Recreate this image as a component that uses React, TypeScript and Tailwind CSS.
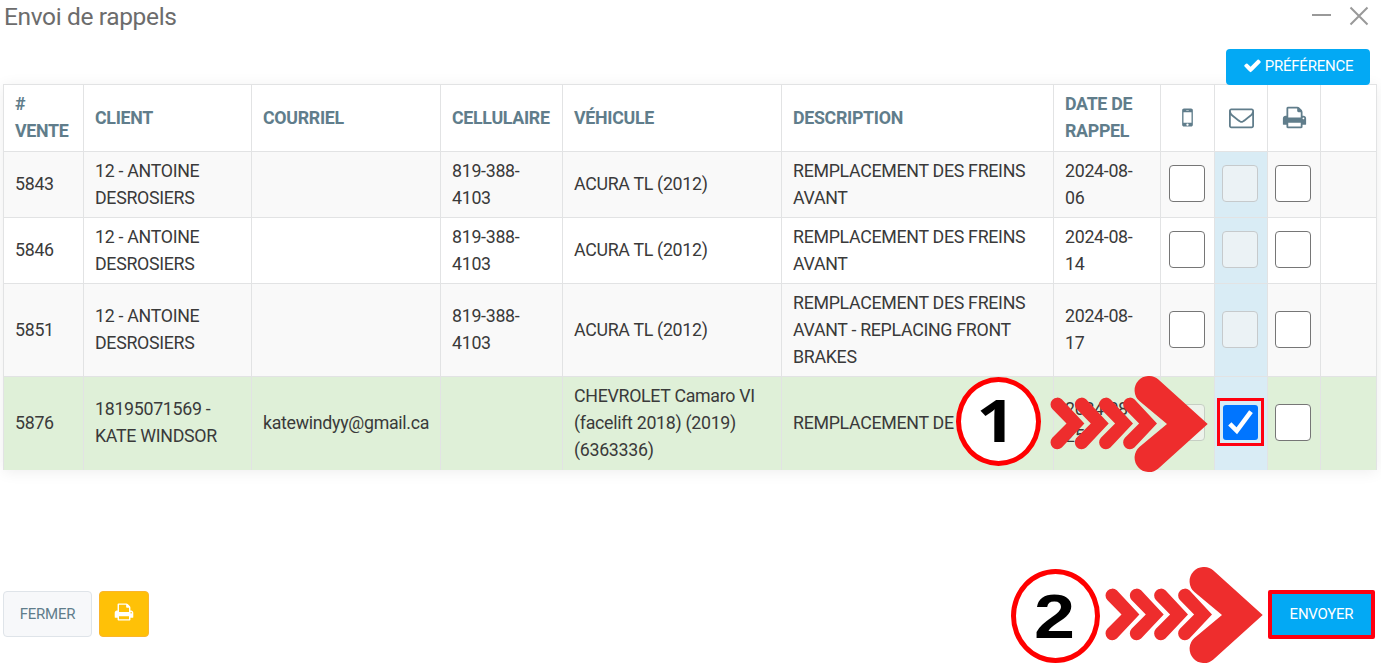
import React from "react";

const PRINT =
  "M448 1536h896v-256h-896v256zm0-640h896v-384h-160q-40 0-68-28t-28-68v-160h-640v640zm1152 64q0-26-19-45t-45-19-45 19-19 45 19 45 45 19 45-19 19-45zm128 0v416q0 13-9.5 22.5t-22.5 9.5h-224v160q0 40-28 68t-68 28h-960q-40 0-68-28t-28-68v-160h-224q-13 0-22.5-9.5t-9.5-22.5v-416q0-79 56.5-135.5t135.5-56.5h64v-544q0-40 28-68t68-28h672q40 0 88 20t76 48l152 152q28 28 48 76t20 88v256h64q79 0 135.5 56.5t56.5 135.5z";
const CHECK =
  "M1671 566q0 40-28 68l-724 724-136 136q-28 28-68 28t-68-28l-136-136-362-362q-28-28-28-68t28-68l136-136q28-28 68-28t68 28l294 295 656-657q28-28 68-28t68 28l136 136q28 28 28 68z";
const ENVELOPE =
  "M1664 1504v-768q-32 36-69 66-268 206-426 338-51 43-83 67t-86.5 48.5-102.5 24.5h-2q-48 0-102.5-24.5t-86.5-48.5-83-67q-158-132-426-338-37-30-69-66v768q0 13 9.5 22.5t22.5 9.5h1472q13 0 22.5-9.5t9.5-22.5zm0-1051v-24.5l-.5-13-3-12.5-5.5-9-9-7.5-14-2.5h-1472q-13 0-22.5 9.5t-9.5 22.5q0 168 147 284 193 152 401 317 6 5 35 29.5t46 37.5 44.5 31.5 50.5 27.5 43 9h2q20 0 43-9t50.5-27.5 44.5-31.5 46-37.5 35-29.5q208-165 401-317 54-43 100.5-115.5t46.5-131.5zm128-37v1088q0 66-47 113t-113 47h-1472q-66 0-113-47t-47-113v-1088q0-66 47-113t113-47h1472q66 0 113 47t47 113z";
const MOBILE =
  "M976 1408q0-33-23.5-56.5t-56.5-23.5-56.5 23.5-23.5 56.5 23.5 56.5 56.5 23.5 56.5-23.5 23.5-56.5zm208-160v-704q0-13-9.5-22.5t-22.5-9.5h-512q-13 0-22.5 9.5t-9.5 22.5v704q0 13 9.5 22.5t22.5 9.5h512q13 0 22.5-9.5t9.5-22.5zm-192-848q0-16-16-16h-160q-16 0-16 16t16 16h160q16 0 16-16zm288-16v1024q0 52-38 90t-90 38h-512q-52 0-90-38t-38-90v-1024q0-52 38-90t90-38h512q52 0 90 38t38 90z";

function Icon({ d, className }: { d: string; className: string }) {
  return (
    <svg viewBox="0 0 1792 1792" fill="currentColor" className={className} aria-hidden="true">
      <path d={d} />
    </svg>
  );
}

type BoxState = "empty" | "disabled" | "disabledGreen" | "checked";

function Box({ state }: { state: BoxState }) {
  switch (state) {
    case "checked":
      return (
        <span className="mx-auto flex h-[48px] w-[47px] items-center justify-center border-[3px] border-[#ff0010]">
          <span className="flex size-[35px] items-center justify-center rounded-[3px] bg-[#0075ff]">
            <svg viewBox="0 0 35 35" className="size-[35px]" fill="none" stroke="#fff" strokeWidth="4.6">
              <path d="M6.800 18.800l7 7L28 6.600" />
            </svg>
          </span>
        </span>
      );
    case "disabled":
      return <span className="mx-auto block h-[37px] w-[36px] rounded-[4px] border-[1.500px] border-[#c6cacc] bg-[#ebf2f5]" />;
    case "disabledGreen":
      return <span className="mx-auto block h-[37px] w-[36px] rounded-[4px] border-[1.500px] border-[#c6cfc4] bg-[#edf3eb]" />;
    default:
      return <span className="mx-auto block h-[37px] w-[36px] rounded-[4px] border-[1.500px] border-[#767676] bg-white" />;
  }
}

interface Row {
  id: string;
  client: string;
  email: string;
  phone: string;
  vehicle: string;
  description: string;
  date: string;
  boxes: [BoxState, BoxState, BoxState];
  rowClass: string;
}

const plain: [BoxState, BoxState, BoxState] = ["empty", "disabled", "empty"];

const rows: Row[] = [
  { id: "5843", client: "12 - ANTOINE DESROSIERS", email: "", phone: "819-388-4103", vehicle: "ACURA TL (2012)", description: "REMPLACEMENT DES FREINS AVANT", date: "2024-08-06", boxes: plain, rowClass: "h-[66px] bg-[#f9f9f9]" },
  { id: "5846", client: "12 - ANTOINE DESROSIERS", email: "", phone: "819-388-4103", vehicle: "ACURA TL (2012)", description: "REMPLACEMENT DES FREINS AVANT", date: "2024-08-14", boxes: plain, rowClass: "h-[66px] bg-white" },
  { id: "5851", client: "12 - ANTOINE DESROSIERS", email: "", phone: "819-388-4103", vehicle: "ACURA TL (2012)", description: "REMPLACEMENT DES FREINS AVANT - REPLACING FRONT BRAKES", date: "2024-08-17", boxes: plain, rowClass: "h-[93px] bg-[#f9f9f9]" },
  { id: "5876", client: "18195071569 - KATE WINDSOR", email: "katewindyy@gmail.ca", phone: "", vehicle: "CHEVROLET Camaro VI (facelift 2018) (2019) (6363336)", description: "REMPLACEMENT DE", date: "2024-08-25", boxes: ["disabledGreen", "checked", "empty"], rowClass: "h-[93px] bg-[#dff0d8]" },
];

const cell = "border border-[#e2e3e4] pt-0 pb-[2px] pl-[11px] pr-[10px] text-left align-middle";
const dateCell = "border border-[#e2e3e4] pt-0 pb-[2px] pl-[11px] pr-[20px] text-left align-middle";
const iconHead = "border border-[#e2e3e4] px-0 pt-0 pb-[2px] align-middle";
const boxCell = "border border-[#e2e3e4] pl-0 pr-[2px] pt-0 pb-[2px] align-middle";

function Arrow() {
  return (
    <svg width="158" height="97" viewBox="0 0 158 97" fill="#ee2d2d">
      {[0, 24.3, 48.6, 72.6].map((x) => (
        <path
          key={x}
          transform={`translate(${x} 0)`}
          d="M2.300 33A6.800 6.800 0 0 1 11.800 23.300L34.400 47.500 11.800 71.500A6.800 6.800 0 0 1 2.300 61.800L16.500 47.500z"
        />
      ))}
      <path d="M89.400 25A14.300 14.300 0 0 1 108.400 3.600L157.700 48 108.400 92.400A14.300 14.300 0 0 1 89.400 71L117 48z" />
    </svg>
  );
}

export default function App() {
  return (
    <div className="relative flex h-[665px] w-[1381px] flex-col overflow-hidden bg-white font-['Roboto',sans-serif] text-[17.8px] leading-[27px] tracking-[-0.3px] text-[#3a3a3a]">
      <header className="flex h-[49px] items-start justify-between pl-[4px] pr-[12px]">
        <h1 className="pt-[1px] text-[24.500px] leading-[32px] tracking-[-0.36px] text-[#6c6c6c]">Envoi de rappels</h1>
        <div className="flex gap-[18px] pt-[6px] text-[#999]">
          <svg width="19" height="20" viewBox="0 0 19 20" stroke="currentColor" strokeWidth="2">
            <path d="M0 9h19" />
          </svg>
          <svg width="20" height="20" viewBox="0 0 20 20" stroke="currentColor" strokeWidth="2">
            <path d="M1.500 1.500l17 17M18.500 1.500l-17 17" />
          </svg>
        </div>
      </header>

      <div className="flex h-[35px] justify-end pr-[11px]">
        <button className="z-10 flex h-[36px] w-[144px] items-center justify-center gap-[3px] rounded-[4px] bg-[#03a9f4] pb-[2px] text-[15px] leading-[20px] tracking-[-0.24px] text-white">
          <Icon d={CHECK} className="mb-[1px] size-[19px]" />
          <span>PRÉFÉRENCE</span>
        </button>
      </div>

      <table className="ml-[3px] w-[1374px] table-fixed border-collapse shadow-[0_2px_14px_rgba(0,0,0,0.07)] [&_tr:last-child>td]:border-b-0">
        <colgroup>
          <col className="w-[80px]" />
          <col className="w-[168px]" />
          <col className="w-[189px]" />
          <col className="w-[122px]" />
          <col className="w-[219px]" />
          <col className="w-[272px]" />
          <col className="w-[107px]" />
          <col className="w-[54px]" />
          <col className="w-[53px]" />
          <col className="w-[53px]" />
          <col />
        </colgroup>
        <thead>
          <tr className="h-[67px] bg-white font-bold text-[#607d8b]">
            <th className={cell}># VENTE</th>
            <th className={cell}>CLIENT</th>
            <th className={cell}>COURRIEL</th>
            <th className={cell}>CELLULAIRE</th>
            <th className={cell}>VÉHICULE</th>
            <th className={cell}>DESCRIPTION</th>
            <th className={dateCell}>DATE DE RAPPEL</th>
            <th className={iconHead}><Icon d={MOBILE} className="mx-auto size-[25px]" /></th>
            <th className={iconHead}><Icon d={ENVELOPE} className="mx-auto size-[25px]" /></th>
            <th className={iconHead}><Icon d={PRINT} className="mx-auto size-[25px]" /></th>
            <th className={iconHead} />
          </tr>
        </thead>
        <tbody>
          {rows.map((r) => (
            <tr key={r.id} className={r.rowClass}>
              <td className={cell}>{r.id}</td>
              <td className={cell}>{r.client}</td>
              <td className={cell}>{r.email}</td>
              <td className={cell}>{r.phone}</td>
              <td className={cell}>{r.vehicle}</td>
              <td className={cell}>{r.description}</td>
              <td className={dateCell}>{r.date}</td>
              <td className={boxCell}><Box state={r.boxes[0]} /></td>
              <td className="border border-[#e2e3e4] bg-[#d9ecf5] pt-0 pr-[2px] pb-[2px] pl-0 align-middle"><Box state={r.boxes[1]} /></td>
              <td className={boxCell}><Box state={r.boxes[2]} /></td>
              <td className={boxCell} />
            </tr>
          ))}
        </tbody>
      </table>

      <footer className="mt-auto mb-[26px] flex h-[49px] items-start justify-between pl-[3px] pr-[6px] tracking-[-0.24px]">
        <div className="flex gap-[7px] pt-[1px]">
          <button className="h-[46px] w-[89px] rounded-[4px] border border-[#dfe4e9] bg-[#f7f8fa] text-[15px] text-[#607d8b]">FERMER</button>
          <button className="flex h-[46px] w-[50px] items-center justify-center rounded-[4px] border border-[#fbb52b] bg-[#ffc107] pb-[4px] text-white">
            <Icon d={PRINT} className="size-[20px]" />
          </button>
        </div>
        <button className="h-[49px] w-[107px] rounded-[2px] border-[4.500px] border-[#ff0010] bg-[#03a9f4] text-[15px] text-white">ENVOYER</button>
      </footer>

      <div className="absolute left-[956px] top-[377px] flex h-[89px] w-[85px] items-center justify-center rounded-[50%] border-[5.500px] border-[#ff0000] bg-white pr-[5px] pb-[5px]">
        <span className="scale-x-[1.15] font-['Open_Sans',sans-serif] text-[59px] font-bold leading-none tracking-normal text-black">1</span>
      </div>
      <div className="absolute left-[1050px] top-[376px]"><Arrow /></div>

      <div className="absolute left-[1011px] top-[569px] flex h-[94px] w-[89px] items-center justify-center rounded-[50%] border-[5.500px] border-[#ff0000] bg-white pr-[2px]">
        <span className="scale-x-[1.17] font-['Liberation_Sans',sans-serif] text-[63px] font-bold leading-none tracking-normal text-black">2</span>
      </div>
      <div className="absolute left-[1105px] top-[567px]"><Arrow /></div>
    </div>
  );
}
